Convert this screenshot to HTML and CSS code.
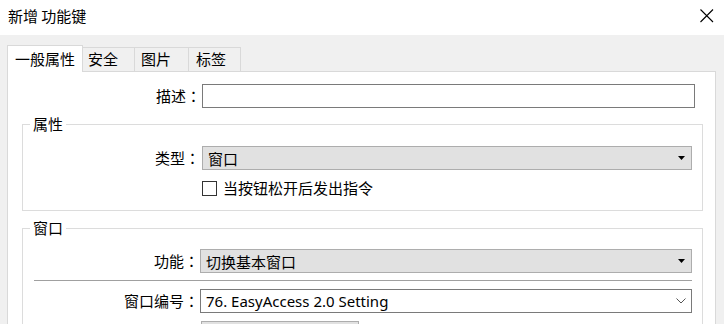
FILE: index.html
```html
<!DOCTYPE html>
<html lang="zh-CN">
<head>
<meta charset="utf-8">
<title>新增 功能键</title>
<link rel="stylesheet" href="styles.css">
</head>
<body>
<div class="dialog">
  <div class="titlebar">
    <span class="title">新增 功能键</span>
    <svg class="close" width="14" height="14" viewBox="0 0 14 14"><path d="M0.5 0.5 L13 13 M13 0.5 L0.5 13" stroke="#000" stroke-width="1.1" fill="none"/></svg>
  </div>
  <div class="client">
    <div class="tabs">
      <div class="tab active">一般属性</div>
      <div class="tab t2">安全</div>
      <div class="tab t3">图片</div>
      <div class="tab t4">标签</div>
    </div>
    <div class="panel">
      <div class="row desc-row">
        <label class="lbl lbl-desc">描述<span class="colon">：</span></label>
        <div class="textbox"></div>
      </div>
      <fieldset class="group g1">
        <legend>属性</legend>
        <div class="row">
          <label class="lbl lbl-g1">类型<span class="colon">：</span></label>
          <div class="select gray w-type">
            <span>窗口</span>
            <svg class="tri" width="7" height="4" viewBox="0 0 7 4"><path d="M0 0 H7 L3.5 4 Z" fill="#000"/></svg>
          </div>
        </div>
        <div class="row check-row">
          <span class="checkbox"></span>
          <span class="check-text">当按钮松开后发出指令</span>
        </div>
      </fieldset>
      <fieldset class="group g2">
        <legend>窗口</legend>
        <div class="row">
          <label class="lbl lbl-g2">功能<span class="colon">：</span></label>
          <div class="select gray w-func">
            <span>切换基本窗口</span>
            <svg class="tri" width="7" height="4" viewBox="0 0 7 4"><path d="M0 0 H7 L3.5 4 Z" fill="#000"/></svg>
          </div>
        </div>
        <div class="sep"></div>
        <div class="row">
          <label class="lbl lbl-g2">窗口编号<span class="colon">：</span></label>
          <div class="select white w-func">
            <span class="latin">76. EasyAccess 2.0 Setting</span>
            <svg class="chev" width="10" height="6" viewBox="0 0 10 6"><path d="M0.5 0.5 L5 5 L9.5 0.5" stroke="#555" stroke-width="1" fill="none"/></svg>
          </div>
        </div>
        <div class="row">
          <div class="graybox"></div>
        </div>
      </fieldset>
    </div>
  </div>
</div>
</body>
</html>
```
FILE: styles.css
```css
html, body {
  margin: 0;
  padding: 0;
  background: #ffffff;
}
body {
  width: 724px;
  height: 324px;
  overflow: hidden;
  font-family: "Noto Sans CJK SC", "Noto Sans", sans-serif;
  font-size: 15px;
  color: #000;
}
.dialog {
  display: flex;
  flex-direction: column;
  height: 324px;
  overflow: hidden;
}
.titlebar {
  height: 35px;
  flex: none;
  display: flex;
  align-items: center;
  justify-content: space-between;
  padding: 0 10px 0 8px;
  box-sizing: border-box;
  background: #fff;
}
.title {
  line-height: 20px;
  margin-top: -4px;
}
.close {
  margin-top: -3px;
}
.client {
  flex: 1;
  min-height: 0;
  background: #f0f0f0;
  padding: 10px 8px 0 7px;
  display: flex;
  flex-direction: column;
}
.tabs {
  display: flex;
  align-items: flex-end;
  height: 26px;
  flex: none;
}
.tab {
  box-sizing: border-box;
  height: 24px;
  border-top: 1px solid #d9d9d9;
  border-right: 1px solid #d9d9d9;
  background: #f0f0f0;
  line-height: 22px;
  padding-left: 5px;
}
.tab.active {
  height: 27px;
  margin-bottom: -1px;
  background: #fff;
  border-left: 1px solid #d9d9d9;
  width: 76px;
  padding-left: 7px;
  line-height: 26px;
  position: relative;
  z-index: 1;
}
.t2 { width: 52px; }
.t3 { width: 54px; padding-left: 6px; }
.t4 { width: 52px; padding-left: 7px; }
.panel {
  flex: 1;
  min-height: 0;
  overflow: hidden;
  background: #fff;
  border: 1px solid #d9d9d9;
  border-bottom: none;
  padding-top: 12px;
}
.row {
  display: flex;
  align-items: center;
}
.lbl {
  flex: none;
  text-align: right;
  line-height: 24px;
}
.colon {
  font-family: "Noto Sans CJK TC", "Noto Sans CJK SC", sans-serif;
  display: inline-block;
  width: 15px;
  margin-right: 1px;
  text-align: center;
}
.lbl-desc { width: 194px; }
.textbox {
  width: 493px;
  height: 24px;
  box-sizing: border-box;
  border: 1px solid #7a7a7a;
  background: #fff;
}
.group {
  margin: 6px 12px 0 14px;
  border: 1px solid #dcdcdc;
  padding: 12px 10px 14px 0;
  min-width: 0;
}
.group legend {
  padding: 0 3px;
  margin-left: 7px;
  line-height: 20px;
}
.g2 {
  margin-top: 7px;
  padding-top: 11px;
  padding-bottom: 0;
  border-bottom: none;
}
.lbl-g1 { width: 178px; margin-right: 1px; }
.lbl-g2 { width: 177px; }
.select {
  box-sizing: border-box;
  height: 24px;
  display: flex;
  align-items: center;
  justify-content: space-between;
  padding: 0 6px 0 5px;
}
.select.gray {
  background: #e1e1e1;
  border: 1px solid #adadad;
}
.select.white {
  background: #fff;
  border: 1px solid #7a7a7a;
  padding-right: 5px;
}
.w-type { width: 490px; }
.w-func { width: 492px; }
.check-row {
  margin-top: 10px;
  padding-left: 179px;
  height: 16px;
}
.checkbox {
  width: 15px;
  height: 15px;
  box-sizing: border-box;
  border: 1px solid #333;
  background: #fff;
  flex: none;
}
.check-text {
  margin-left: 6px;
  line-height: 16px;
}
.sep {
  height: 1px;
  background: #a0a0a0;
  margin: 7px 0 8px 11px;
}
.latin {
  font-family: "Noto Sans", "Noto Sans CJK SC", sans-serif;
  font-size: 15px;
}
.graybox {
  margin-top: 8px;
  margin-left: 178px;
  width: 158px;
  height: 24px;
  background: #e1e1e1;
  border: 1px solid #adadad;
  box-sizing: border-box;
}
```
